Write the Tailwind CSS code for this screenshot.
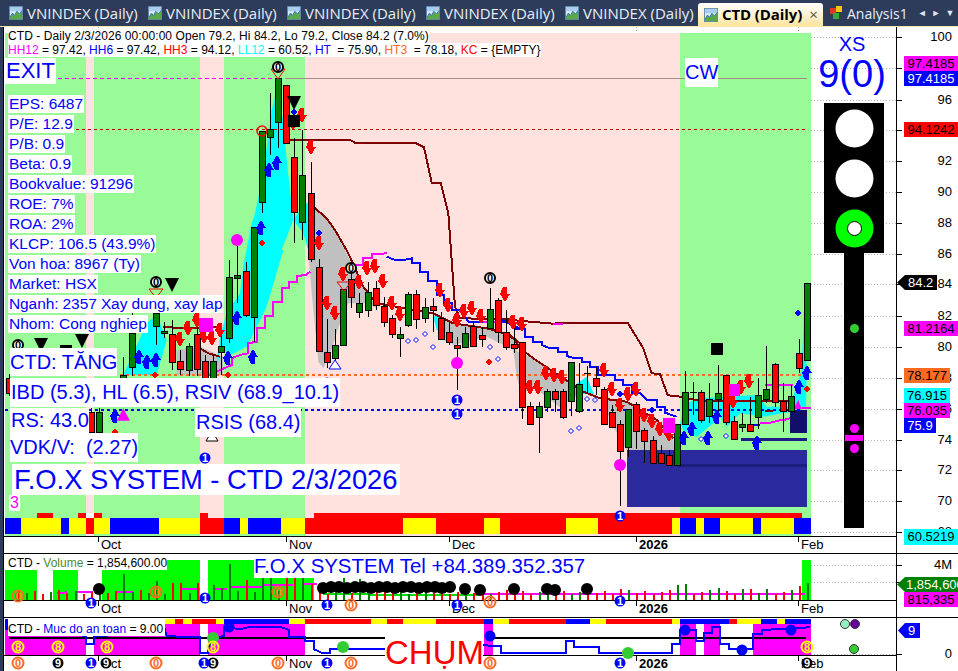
<!DOCTYPE html>
<html lang="en">
<head>
<meta charset="UTF-8">
<title>CTD (Daily)</title>
<script src="https://cdn.jsdelivr.net/npm/@tailwindcss/browser@4"></script>
</head>
<body class="w-[958px] h-[671px] overflow-hidden bg-white font-['Liberation_Sans',sans-serif] text-black">

<svg class="hidden">
  <symbol id="thumb" viewBox="0 0 16 16">
    <rect x="0.5" y="0.5" width="15" height="15" fill="#dcecf8" stroke="#5a7fa6"/>
    <rect x="1" y="1" width="14" height="5" fill="#a9cdf0"/>
    <path d="M1 13 L4 8 L6 11 L9 6 L12 9 L15 5 L15 15 L1 15Z" fill="#5aa84a"/>
    <path d="M1 13 L4 8 L6 11 L9 6 L12 9 L15 5" fill="none" stroke="#2f6fb0"/>
  </symbol>
</svg>

<!-- tabs -->
<div class="h-[27px] bg-[#2d3c5a] border-b border-[#fde7ad] flex items-start pl-[9px] text-[15px] text-[#e8eef6] font-['Open_Sans',sans-serif]">
  <div class="w-[139px] h-[26px] flex items-center gap-[4px] shrink-0"><svg class="w-[14px] h-[14px]"><use href="#thumb"/></svg><span>VNINDEX (Daily)</span></div>
  <div class="w-[139px] h-[26px] flex items-center gap-[4px] shrink-0"><svg class="w-[14px] h-[14px]"><use href="#thumb"/></svg><span>VNINDEX (Daily)</span></div>
  <div class="w-[139px] h-[26px] flex items-center gap-[4px] shrink-0"><svg class="w-[14px] h-[14px]"><use href="#thumb"/></svg><span>VNINDEX (Daily)</span></div>
  <div class="w-[139px] h-[26px] flex items-center gap-[4px] shrink-0"><svg class="w-[14px] h-[14px]"><use href="#thumb"/></svg><span>VNINDEX (Daily)</span></div>
  <div class="w-[133px] h-[26px] flex items-center gap-[4px] shrink-0"><svg class="w-[14px] h-[14px]"><use href="#thumb"/></svg><span>VNINDEX (Daily)</span></div>
  <div class="w-[125px] h-[23px] mt-[3px] shrink-0 rounded-t-[3px] bg-gradient-to-b from-white to-[#fde49c] flex items-center pl-[6px] gap-[4px] text-black">
    <svg class="w-[14px] h-[14px]"><use href="#thumb"/></svg><span class="font-bold text-[15px] tracking-[-0.1px]">CTD (Daily)</span><span class="ml-[3px] text-[#55524a] text-[15px]">×</span>
  </div>
  <div class="h-[26px] flex items-center gap-[4px] ml-[6px] shrink-0 text-[14px]">
    <svg class="w-[14px] h-[14px]" viewBox="0 0 14 14"><rect x="1" y="2" width="6" height="6" fill="#e0342b"/><rect x="7" y="0" width="6" height="6" fill="#f5c518"/><rect x="4" y="7" width="6" height="6" fill="#39a935"/></svg>
    <span>Analysis1</span>
  </div>
  <div class="flex items-center gap-[5px] h-[26px] ml-[10px] text-[9px] text-[#dfe6ef] shrink-0"><span>◄</span><span>►</span><span>▼</span></div>
</div>

<div class="flex h-[644px]">
  <div class="w-[4px] bg-[#2d3c5a] border-r border-black shrink-0"></div>
  <div class="flex-1 flex flex-col">

    <!-- price pane -->
    <div class="h-[527px] flex border-b border-black">
      <div class="relative w-[892px] flex flex-col">
        <div class="flex-1"></div>
        <div class="h-[17px] border-t border-black flex text-[13px] leading-[16px]">
          <div class="w-[94px]"></div>
          <div class="relative w-[188px] pl-[3px]"><i class="absolute left-0 top-0 w-px h-[5px] bg-black"></i>Oct</div>
          <div class="relative w-[163px] pl-[3px]"><i class="absolute left-0 top-0 w-px h-[5px] bg-black"></i>Nov</div>
          <div class="relative w-[187px] pl-[3px]"><i class="absolute left-0 top-0 w-px h-[5px] bg-black"></i>Dec</div>
          <div class="relative w-[162px] pl-[3px] font-bold"><i class="absolute left-0 top-0 w-px h-[5px] bg-black"></i>2026</div>
          <div class="relative pl-[3px]"><i class="absolute left-0 top-0 w-px h-[5px] bg-black"></i>Feb</div>
        </div>
        <svg id="main" class="absolute left-0 top-0 w-[892px] h-[526px]" viewBox="4 27 892 526" shape-rendering="crispEdges"></svg>

        <div class="absolute left-[4px] top-[2px] text-[12px] leading-[14px]">
          <div class="bg-white w-fit tracking-[0.07px]">CTD - Daily 2/3/2026 00:00:00 Open 79.2, Hi 84.2, Lo 79.2, Close 84.2 (7.0%)</div>
          <div class="bg-white w-fit whitespace-pre"><span class="text-[#ff00ff]">HH12</span> = 97.42, <span class="text-[#0000ff]">HH6</span> = 97.42, <span class="text-[#ff0000]">HH3</span> = 94.12, <span class="text-[#00ffff]">LL12</span> = 60.52, <span class="text-[#0000ff]">HT</span>  = 75.90, <span class="text-[#ff6a23]">HT3</span>  = 78.18, <span class="text-[#ff0000]">KC</span> = {EMPTY}</div>
        </div>
        <div class="absolute left-[1px] top-[31px] bg-white text-[#0000ff] text-[22px] leading-[26px] px-[1px]">EXIT</div>
        <div class="absolute left-[681px] top-[31px] bg-white text-[#0000ff] text-[20px] leading-[29px]">CW</div>

        <div class="absolute left-[4px] top-[68px] flex flex-col items-start gap-[2px] text-[15.5px] leading-[18px] text-[#0000ff]">
          <div class="bg-white px-[1px]">EPS: 6487</div>
          <div class="bg-white px-[1px]">P/E: 12.9</div>
          <div class="bg-white px-[1px]">P/B: 0.9</div>
          <div class="bg-white px-[1px]">Beta: 0.9</div>
          <div class="bg-white px-[1px]">Bookvalue: 91296</div>
          <div class="bg-white px-[1px]">ROE: 7%</div>
          <div class="bg-white px-[1px]">ROA: 2%</div>
          <div class="bg-white px-[1px]">KLCP: 106.5 (43.9%)</div>
          <div class="bg-white px-[1px]">Von hoa: 8967 (Ty)</div>
          <div class="bg-white px-[1px]">Market: HSX</div>
          <div class="bg-white px-[1px] tracking-[-0.1px]">Nganh: 2357 Xay dung, xay lap</div>
          <div class="bg-white px-[1px]">Nhom: Cong nghiep</div>
        </div>

        <div class="absolute left-[6px] top-[321px] bg-white text-[#0000ff] text-[20px] leading-[28px]">CTD: TĂNG</div>
        <div class="absolute left-[6px] top-[351px] bg-white text-[#0000ff] text-[20px] leading-[29px] px-[1px] whitespace-nowrap">IBD (5.3), HL (6.5), RSIV (68.9_10.1)</div>
        <div class="absolute left-[6px] top-[381px] bg-white text-[#0000ff] text-[20px] leading-[25px] pl-[1px]">RS: 43.0</div>
        <div class="absolute left-[6px] top-[406px] bg-white text-[#0000ff] text-[20px] leading-[29px] whitespace-pre">VDK/V:  (2.27)</div>
        <div class="absolute left-[191px] top-[381px] bg-white text-[#0000ff] text-[20px] leading-[29px] px-[1px]">RSIS (68.4)</div>
        <div class="absolute left-[8px] top-[437px] bg-white text-[#0000ff] text-[27.4px] leading-[31px] px-[2px] whitespace-nowrap">F.O.X SYSTEM - CTD 2/3/2026</div>
        <div class="absolute left-[5px] top-[468px] bg-white text-[#ff00ff] text-[16px] leading-[16px] px-[1px]">3</div>

        <div class="absolute left-[807px] top-[6px] w-[82px] text-center text-[#0000ff]">
          <div class="text-[20px] leading-[22px]">XS</div>
          <div class="text-[38px] leading-[38px]">9(0)</div>
        </div>
      </div>
      <div id="ax1" class="relative flex-1 border-l border-black text-[13px]">
        <div class="absolute left-[7px] top-[29px] w-[54px] h-[15px] bg-[#ff00ff] text-center leading-[15px]">97.4185</div>
        <div class="absolute left-[7px] top-[44px] w-[54px] h-[15px] bg-[#0000ff] text-white text-center leading-[15px]">97.4185</div>
        <div class="absolute left-[7px] top-[95px] w-[54px] h-[15px] bg-[#ff0000] text-center leading-[15px]">94.1242</div>
        <div class="absolute left-0 top-[248px] w-[40px] h-[15px] bg-black text-white pl-[11px] leading-[15px] [clip-path:polygon(8px_0,100%_0,100%_100%,8px_100%,0_50%)]">84.2</div>
        <div class="absolute left-[7px] top-[294px] w-[54px] h-[15px] bg-[#ff00ff] text-center leading-[15px]">81.2164</div>
        <div class="absolute left-[7px] top-[341px] w-[46px] h-[15px] bg-[#ff6a23] text-center leading-[15px]">78.177</div>
        <div class="absolute left-[7px] top-[361px] w-[46px] h-[15px] bg-[#00ffff] text-center leading-[15px]">76.915</div>
        <div class="absolute left-[7px] top-[376px] w-[46px] h-[15px] bg-[#ff00ff] text-center leading-[15px]">76.035</div>
        <div class="absolute left-[7px] top-[391px] w-[32px] h-[15px] bg-[#0000ff] text-white text-center leading-[15px]">75.9</div>
        <div class="absolute left-[7px] top-[502px] w-[54px] h-[16px] bg-[#00ffff] text-center leading-[16px]">60.5219</div>
      </div>
    </div>

    <!-- volume pane -->
    <div class="h-[64px] flex border-b border-black">
      <div class="relative w-[892px] flex flex-col">
        <div class="flex-1"></div>
        <div class="h-[17px] border-t border-black flex text-[13px] leading-[16px]">
          <div class="w-[94px]"></div>
          <div class="relative w-[188px] pl-[3px]"><i class="absolute left-0 top-0 w-px h-[5px] bg-black"></i>Oct</div>
          <div class="relative w-[163px] pl-[3px]"><i class="absolute left-0 top-0 w-px h-[5px] bg-black"></i>Nov</div>
          <div class="relative w-[187px] pl-[3px]"><i class="absolute left-0 top-0 w-px h-[5px] bg-black"></i>Dec</div>
          <div class="relative w-[162px] pl-[3px] font-bold"><i class="absolute left-0 top-0 w-px h-[5px] bg-black"></i>2026</div>
          <div class="relative pl-[3px]"><i class="absolute left-0 top-0 w-px h-[5px] bg-black"></i>Feb</div>
        </div>
        <svg id="vol" class="absolute left-0 top-0 w-[892px] h-[63px]" viewBox="4 554 892 63" shape-rendering="crispEdges"></svg>
        <div class="absolute left-[4px] top-[2px] bg-white text-[12px] leading-[14px]">CTD - <span class="text-[#4d8c2a]">Volume</span> = 1,854,600.00</div>
        <div class="absolute left-[250px] top-[1px] bg-white text-[#0000ff] text-[20.4px] leading-[23px] whitespace-nowrap">F.O.X SYSTEM Tel +84.389.352.357</div>
      </div>
      <div id="ax2" class="relative flex-1 border-l border-black text-[13px]">
        <div class="absolute left-0 top-[23px] w-[61px] h-[15px] bg-[#008000] text-white pl-[9px] leading-[15px] overflow-hidden whitespace-nowrap [clip-path:polygon(8px_0,100%_0,100%_100%,8px_100%,0_50%)]">1,854,600</div>
        <div class="absolute left-[7px] top-[38px] w-[54px] h-[15px] bg-[#ff00ff] text-center leading-[15px]">815,335</div>
      </div>
    </div>

    <!-- safety pane -->
    <div class="h-[53px] flex">
      <div class="relative w-[892px] flex flex-col">
        <div class="flex-1"></div>
        <div class="h-[16px] border-t border-black flex text-[13px] leading-[15px]">
          <div class="w-[94px]"></div>
          <div class="relative w-[188px] pl-[3px]"><i class="absolute left-0 top-0 w-px h-[5px] bg-black"></i>Oct</div>
          <div class="relative w-[163px] pl-[3px]"><i class="absolute left-0 top-0 w-px h-[5px] bg-black"></i>Nov</div>
          <div class="relative w-[187px] pl-[3px]"><i class="absolute left-0 top-0 w-px h-[5px] bg-black"></i>Dec</div>
          <div class="relative w-[162px] pl-[3px] font-bold"><i class="absolute left-0 top-0 w-px h-[5px] bg-black"></i>2026</div>
          <div class="relative pl-[3px]"><i class="absolute left-0 top-0 w-px h-[5px] bg-black"></i>Feb</div>
        </div>
        <div class="absolute left-[381px] top-[17px] w-[98px] h-[36px] bg-white"></div>
        <svg id="safe" class="absolute left-0 top-0 w-[892px] h-[53px]" viewBox="4 618 892 53" shape-rendering="crispEdges"></svg>
        <div class="absolute left-[4px] top-[4px] bg-white text-[12px] leading-[14px] pr-[2px]">CTD - <span class="text-[#0000ff]">Muc do an toan</span> = 9.00</div>
        <div class="absolute left-[381px] top-[17px] text-[#ff0000] text-[33px] leading-[36px]">CHỤM</div>
      </div>
      <div id="ax3" class="relative flex-1 border-l border-black text-[13px]">
        <div class="absolute left-[1px] top-[5px] w-[22px] h-[15px] bg-[#0000ff] text-white pl-[10px] leading-[15px] [clip-path:polygon(7px_0,100%_0,100%_100%,7px_100%,0_50%)]">9</div>
      </div>
    </div>
  </div>
</div>

<script>
// page coordinates throughout, the o* helpers convert from traced crops
const RED = '#ff0000', GRN = '#008000', BLU = '#0000ff', MAG = '#ff00ff', CYA = '#00ffff', DRED = '#800000', GRY = '#c0c0c0';
const barX = k => Math.round(1.3 + 8.14 * k);

const rect = (x, y, x2, y2, c) => `<rect x="${x}" y="${y}" width="${x2 - x}" height="${y2 - y}" fill="${c}"/>`;
const tr = (ox, oy, s) => s.trim().split(/\s+/).map(p => { const [a, b] = p.split(','); return `${(ox + a / 3).toFixed(1)},${(oy + b / 3).toFixed(1)}`; }).join(' ');
const poly = (ox, oy, s, c) => `<polygon points="${tr(ox, oy, s)}" fill="${c}" shape-rendering="auto"/>`;
const line = (ox, oy, s, c, w = 2) => `<polyline points="${tr(ox, oy, s)}" fill="none" stroke="${c}" stroke-width="${w}"/>`;
const hline = (x, x2, y, c, dash) => `<line x1="${x}" x2="${x2}" y1="${y}.5" y2="${y}.5" stroke="${c}" ${dash ? `stroke-dasharray="${dash}"` : ''}/>`;
const hfat = (x, x2, y, c, dash) => `<line x1="${x}" x2="${x2}" y1="${y}" y2="${y}" stroke="${c}" stroke-width="2" stroke-dasharray="${dash}"/>`;
const disc = (x, y, r, c, extra = '') => `<circle cx="${x}" cy="${y}" r="${r}" fill="${c}" ${extra} shape-rendering="auto"/>`;
const dn = (x, y, c = RED) => `<polygon points="${x - 2},${y - 7} ${x + 2},${y - 7} ${x + 2},${y} ${x + 5},${y} ${x},${y + 8} ${x - 5},${y}" fill="${c}"/>`;
const up = (x, y, c = BLU) => `<polygon points="${x - 2},${y + 7} ${x + 2},${y + 7} ${x + 2},${y} ${x + 5},${y} ${x},${y - 8} ${x - 5},${y}" fill="${c}"/>`;
const dia = (x, y, r, c, hollow) => `<polygon points="${x},${y - r} ${x + r},${y} ${x},${y + r} ${x - r},${y}" fill="${hollow ? 'white' : c}" stroke="${c}" shape-rendering="auto"/>`;
const badge = (x, y, t, fill, col, stroke = 'none', r = 5.5, sw = 2) => `<circle cx="${x}" cy="${y}" r="${r}" fill="${fill}" stroke="${stroke}" stroke-width="${sw}" shape-rendering="auto"/><text x="${x}" y="${y + 4}" text-anchor="middle" font-size="11" font-weight="700" font-family="Liberation Sans" fill="${col}">${t}</text>`;

// candles: k, colour, body top, body bottom, wick top, wick bottom
const C = [
 [1,'r',378,393,374,396],[11,'r',412,432,408,436],[12,'g',412,432,408,436],
 [15,'g',375,400,357,405],[16,'g',333,367,313,376],[19,'g',313,326,300,345],[20,'g',331,333,322,338],
 [21,'r',334,362,320,370],[22,'r',361,369,350,375],[23,'g',346,370,343,376],[24,'r',334,369,328,376],
 [25,'r',361,380,355,390],[26,'g',361,380,355,390],[27,'g',346,352,335,375],[28,'g',277,338,260,343],
 [29,'g',275,278,262,303],[30,'r',271,315,262,317],[31,'g',227,317,227,342],[32,'g',131,202,131,213],
 [33,'g',129,137,93,155],[34,'g',78,122,78,148],[35,'r',85,143,85,143],[36,'r',157,212,138,243],
 [37,'g',175,222,130,240],[38,'r',193,259,162,262],[39,'r',267,351,259,352],[40,'r',352,362,319,368],
 [41,'g',345,358,329,360],[42,'g',289,345,289,345],[43,'r',279,297,263,308],[44,'g',303,312,293,318],
 [45,'g',292,310,282,317],[46,'r',288,305,281,310],[47,'r',306,322,297,327],[48,'r',318,334,315,338],
 [49,'g',334,338,327,357],[50,'g',294,325,292,327],[51,'r',294,319,290,329],[52,'g',307,318,298,323],
 [53,'r',306,310,298,332],[54,'r',318,339,312,340],[55,'r',332,342,323,345],[56,'r',345,348,337,390],
 [57,'g',333,347,327,348],[58,'r',326,346,323,347],[59,'r',335,339,327,347],[60,'g',309,328,288,328],
 [61,'r',300,332,298,343],[62,'r',332,347,310,350],[63,'r',344,348,327,353],[64,'r',342,407,342,419],
 [65,'r',406,424,402,425],[66,'g',406,417,402,453],[67,'g',391,407,389,412],[68,'r',391,399,389,412],
 [69,'r',391,417,389,419],[70,'g',362,401,362,416],[71,'g',384,411,363,413],[72,'k',373,373,366,393],
 [73,'r',378,386,367,395],[74,'r',389,424,387,425],[75,'r',412,427,405,428],[76,'r',424,451,420,506],
 [77,'g',409,447,409,457],[78,'r',404,431,402,449],[79,'r',430,441,428,463],[80,'r',440,463,436,464],
 [81,'r',453,463,445,464],[82,'r',455,465,450,466],[83,'g',424,465,424,465],[84,'g',392,424,371,425],
 [85,'k',392,392,382,415],[86,'r',392,420,390,423],[87,'g',399,416,383,423],[88,'g',393,399,365,423],
 [89,'r',375,422,375,425],[90,'r',421,439,416,440],[91,'g',424,427,413,432],[92,'r',424,431,397,431],
 [93,'g',395,417,378,429],[94,'g',389,399,346,403],[95,'r',364,402,363,407],[96,'r',401,411,383,432],
 [97,'g',396,411,385,413],[98,'r',353,368,339,373],[99,'g',283,360,283,360]
];
const candle = ([k, t, a, b, w1, w2]) => {
  const x = barX(k);
  let s = `<rect x="${x}" y="${w1}" width="1" height="${w2 - w1}" fill="#000"/>`;
  if (t === 'k') return s + `<rect x="${x - 3}" y="${a}" width="7" height="1" fill="#000"/>`;
  return s + `<rect x="${x - 3}" y="${a}" width="6" height="${b - a}" fill="${t === 'r' ? RED : GRN}" stroke="#000"/>`;
};

// main price chart
let m = '';
[[5,86,'#98fb98'],[86,94,'#ffe2de'],[94,200,'#98fb98'],[200,224,'#ffe2de'],[224,305,'#98fb98'],[305,680,'#ffe2de'],[680,811,'#98fb98']]
  .forEach(z => m += rect(z[0], 33, z[1], 536, z[2]));
m += rect(811, 33, 896, 536, '#fff');
[98, 636, 798].forEach(x => m += `<line x1="${x}.5" x2="${x}.5" y1="27" y2="33" stroke="#aaa" stroke-dasharray="1 2"/>`);
[37,68,100,130,161,192,223,254,284,316,347,378,409,440,470,501,532].forEach(y => m += hline(811, 896, y, '#b5b5b5', '1 2'));

// grey channel
m += poly(220, 60, '265,430 280,440 320,475 345,510 390,600 430,680 470,735 470,745 440,730 385,730 360,790 330,880 310,925 295,905 275,700 265,580', GRY);
m += poly(220, 60, '650,770 700,790 800,805 870,825 890,850 900,990 890,950 880,870 800,830 700,855 670,840', GRY);
m += poly(500, 270, '40,240 100,265 190,325 210,345 205,390 190,420 100,350 70,370 55,300', GRY);
m += poly(500, 270, '300,385 380,395 470,450 520,505 522,540 380,540 340,470 310,400', GRY);
m += poly(0, 250, '530,300 600,290 670,320 670,375 530,375', GRY);
// cyan
m += poly(220, 60, '165,110 190,180 200,300 220,480 165,620 125,720 95,800 75,860 0,880 -10,925 0,830 20,760 60,700 70,620 95,490 105,460 130,340 155,150', CYA);
m += poly(220, 60, '255,430 268,430 272,600 250,520 220,480', CYA);
m += poly(0, 250, '850,0 800,170 740,290 680,320 672,360 720,130 760,0', CYA);
m += poly(0, 250, '370,375 440,220 470,195 500,270 470,375', CYA);
m += poly(500, 270, '540,460 560,400 600,385 770,375 800,410 870,410 905,300 912,120 920,300 918,415 870,425 790,440 720,430 680,470 660,440 640,460 590,500 550,480', CYA);
m += poly(500, 270, '210,330 225,345 260,320 285,380 260,370 225,380', CYA);
m += poly(220, 60, '640,770 655,765 665,810 650,810', CYA);
m += poly(0, 250, '370,475 350,512 390,512', MAG);
m += poly(500, 270, '895,390 880,418 905,418', MAG);

// navy stop boxes
m += rect(627, 450, 807, 507, '#2a2a9c') + rect(677, 464, 807, 467, '#1d1d7a') + rect(790, 410, 807, 433, '#10106b') + rect(741, 438, 807, 441, '#1c1c88');

// level lines
m += hline(58, 275, 78, MAG, '4 3');
m += hline(285, 807, 78, '#aa8a86');
m += hline(76, 805, 129, '#c00000', '3 3');
m += hfat(120, 807, 375, '#ff6a23', '3 3');
m += hfat(5, 800, 410, BLU, '3 3');

// trend lines
m += line(220, 60, '205,240 390,240 405,248 585,248 612,262 635,368 662,368 685,460 690,530 705,740 720,775 880,778', DRED);
m += line(500, 270, '0,147 160,161 190,158 383,158 430,235 455,310 480,312 503,376 530,378 600,392 880,392', DRED);
m += line(0, 250, '490,232 590,234 660,232', DRED);
m += line(0, 250, '600,295 625,310 660,320', DRED);
m += line(220, 60, '280,440 320,475 345,510 385,580 430,680 470,730 640,760 700,790 800,805 870,825 900,850', DRED);
m += line(500, 270, '0,185 40,205 60,235 100,265 190,325 250,365 300,385 380,395 470,450 520,505', DRED);
m += line(220, 60, '-220,1000 -60,960 0,930 35,915 35,895 60,885 85,880 85,850 110,845 110,805 135,805 135,768 160,768 160,725 185,725 185,685 207,685 207,665 232,665 232,648 258,645 270,635', MAG);
m += line(220, 60, '408,615 430,615 430,595 455,595 455,583 500,580', MAG);
m += line(220, 60, '500,590 525,600 550,600 575,595 575,610 600,610 600,635 625,635 625,662 650,662 650,705 672,705 672,730 695,730 695,750 720,750 745,785 790,785', BLU);
m += line(220, 60, '790,785 825,785', MAG) + line(220, 60, '840,785 870,785 895,805', BLU);
m += line(500, 270, '0,148 20,155 50,178 75,178 75,200 100,200 100,215 125,215 125,225 150,235 175,235 175,245 200,245 200,258 225,265 245,265 245,275 270,275 270,290 295,290 295,315 345,315 345,330 370,330 370,345 395,345 395,370 420,370 440,390 470,390 470,410 495,410 495,428 530,440', BLU);
m += line(500, 270, '760,465 780,465', BLU) + line(500, 270, '780,460 810,458 835,452 860,448 870,445', MAG) + line(500, 270, '795,345 880,345', MAG) + line(500, 270, '905,413 933,413', MAG) + line(500, 270, '160,161 190,161', MAG);
m += rect(765, 410, 773, 412, DRED);

C.forEach(c => m += candle(c));

// arrows
[[245,165],[220,185],[272,260],[296,550],[320,730],[344,760],[368,642],[416,667],[442,625],[466,617],[490,663],[515,730],[540,762],[660,690],[685,735],[710,780],[733,753],[757,745],[782,768],[855,702],[880,785]]
  .forEach(p => m += dn(Math.round(220 + p[0] / 3), Math.round(60 + p[1] / 3)));
[[15,72],[40,155],[65,162],[90,350],[113,350],[139,310],[163,316],[187,320],[311,300],[335,358],[359,405],[383,372],[407,358],[431,435],[455,452],[481,478],[506,493],[724,350],[748,333],[700,392]]
  .forEach(p => m += dn(Math.round(500 + p[0] / 3), Math.round(270 + p[1] / 3)));
[[540,268],[565,233],[590,210],[613,257],[637,265],[661,240]].forEach(p => m += dn(Math.round(p[0] / 3), Math.round(250 + p[1] / 3)));
[[25,895],[100,890],[50,775],[124,505],[148,330],[172,310]].forEach(p => m += up(Math.round(220 + p[0] / 3), Math.round(60 + p[1] / 3)));
[[553,503],[577,478],[625,505],[650,440],[772,520],[896,352],[920,310]].forEach(p => m += up(Math.round(500 + p[0] / 3), Math.round(270 + p[1] / 3)));
[[418,320],[442,335],[467,330],[685,325],[710,203],[760,320],[344,497]].forEach(p => m += up(Math.round(p[0] / 3), Math.round(250 + p[1] / 3)));

// markers
[[237,240],[457,363],[620,465]].forEach(p => m += disc(p[0], p[1], 6, MAG));
m += `<line x1="237" x2="237" y1="246" y2="303" stroke="#000"/>`;
[[199,318,213,332],[663,418,675,433],[729,384,740,396]].forEach(r => m += rect(r[0], r[1], r[2], r[3], MAG));
m += rect(711, 343, 723, 355, '#000') + rect(288, 115, 300, 127, '#000') + rect(60, 345, 72, 348, '#000');
[[172,278],[294,96],[41,338],[82,334]].forEach(p => m += `<polygon points="${p[0] - 7},${p[1]} ${p[0] + 7},${p[1]} ${p[0]},${p[1] + 14}" fill="#000" shape-rendering="auto"/>`);
[[262,243],[489,362],[155,375],[228,375],[115,432]].forEach(p => m += dia(p[0], p[1], 3, RED));
m += dia(807, 389, 3, RED);
[[319,233],[294,112],[620,394],[652,410],[798,313]].forEach(p => m += dia(p[0], p[1], 3, BLU));
[[408,341],[416,340],[425,334],[433,347],[490,347],[498,359],[587,399],[595,400],[571,431],[579,428],[701,439],[726,436]].forEach(p => m += dia(p[0], p[1], 2.5, BLU, true));
m += `<polygon points="335,360 341,369 329,369" fill="white" stroke="${BLU}" shape-rendering="auto"/><polygon points="212,431 218,441 206,441" fill="white" stroke="#000" shape-rendering="auto"/>`;
m += `<polygon points="337,282 351,282 344,291" fill="none" stroke="${RED}" shape-rendering="auto"/><polygon points="271,69 285,69 278,79" fill="none" stroke="${RED}" shape-rendering="auto"/><polygon points="149,289 163,289 156,298" fill="none" stroke="${RED}" shape-rendering="auto"/>`;
m += `<circle cx="262" cy="131" r="5" fill="none" stroke="${RED}" stroke-width="1.5" shape-rendering="auto"/>`;
[[278,67],[351,268],[490,278],[156,282],[18,345]].forEach(p => m += badge(p[0], p[1], '0', 'white', '#000', '#000', 5));
[[457,400],[457,414],[205,458],[327,383]].forEach(p => m += badge(p[0], p[1], '1', BLU, '#fff'));

// bottom signal bands
[[37,53],[78,102],[200,208],[314,802]].forEach(b => m += rect(b[0], 513, b[1], 518, RED));
m += rect(86, 513, 94, 518, '#fff');
[[5,21,BLU],[21,61,'#ff0'],[61,69,BLU],[69,86,'#ff0'],[86,94,RED],[94,110,'#ff0'],[110,159,BLU],[159,200,'#ff0'],[200,224,RED],[224,240,BLU],[240,248,'#ff0'],[248,281,BLU],[281,305,'#ff0'],[305,403,RED],[403,436,'#ff0'],[436,484,RED],[484,500,'#ff0'],[500,566,RED],[566,598,'#ff0'],[598,672,RED],[672,680,'#ff0'],[680,696,BLU],[696,704,'#ff0'],[704,720,BLU],[720,753,'#ff0'],[753,761,BLU],[761,794,'#ff0'],[794,811,BLU]]
  .forEach(b => m += rect(b[0], 518, b[1], 534, b[2]));
m += badge(620, 516, '1', BLU, '#fff');

// traffic light
m += rect(844, 250, 864, 528, '#000') + rect(824, 103, 884, 253, '#000');
m += disc(854.5, 128.5, 19, '#fff') + disc(854.5, 178.5, 19, '#fff') + disc(854.5, 228.5, 19, '#00ff00') + disc(854.5, 228.5, 7, '#fff', 'stroke="#000"');
m += disc(854.5, 328.5, 4.5, '#33cc33') + disc(854.5, 428.5, 4.5, MAG) + disc(854.5, 448.5, 4.5, MAG) + rect(845, 435, 863, 441, MAG);
document.getElementById('main').innerHTML = m;

// volume pane
let v = '';
[[5,37,570],[53,78,570],[102,200,560],[208,305,560],[305,314,578],[802,811,560]].forEach(b => v += rect(b[0], b[2], b[1], 600, '#00ff00'));
v += hline(811, 896, 565, '#b5b5b5', '1 2') + hline(811, 896, 582, '#b5b5b5', '1 2');
v += line(0, 530, '170,190 200,187', MAG) + line(0, 530, '225,187 280,187', MAG) + line(0, 530, '345,187 400,187', MAG) + line(0, 530, '540,178 600,178', MAG) + line(0, 530, '640,176 680,176', MAG) + line(0, 530, '690,170 790,170', MAG) + line(0, 530, '790,165 880,165', MAG) + line(0, 530, '905,163 950,163', MAG);
v += line(0, 530, '970,193 1440,195', '#00dd00') + line(480, 530, '0,193 975,193', MAG);
const tall = {15:574,19:581,28:564,33:566,36:575,39:583,42:568,30:580,26:585,47:586,38:584,32:578,35:578,37:577,24:583,44:579,27:588,22:583,21:583,98:586,99:583,83:585,76:589,92:589,88:588,84:584,94:589,91:589};
const colorOf = {}; C.forEach(c => colorOf[c[0]] = c[1]);
for (let k = 2; k < 100; k++) {
  const top = tall[k] || (594 - (k * 7) % 5);
  const t = colorOf[k] || (k % 3 ? 'r' : 'g');
  v += rect(barX(k), top, barX(k) + 2, 600, t === 'g' ? GRN : RED);
}
[99,323,331,339,347,355,363,371,379,387,395,403,411,419,427,435,442,450,465,480,514,547,555,587].forEach((x, i) => v += disc(x, 587 + (i % 3 === 1 ? 1 : 0) + (x < 323 || x > 450 ? 2 : 0), 6, '#000'));
[[18,596,'0'],[156,592,'0'],[278,592,'0'],[351,605,'0'],[490,602,'0']].forEach(p => v += badge(p[0], p[1], p[2], 'none', '#ff6a23', '#ff6a23'));
[[91,603],[205,598],[327,605],[457,605],[620,601]].forEach(p => v += badge(p[0], p[1], '1', BLU, '#fff'));
document.getElementById('vol').innerHTML = v;

// safety pane
let s = '';
[[5,86],[94,200],[208,305],[484,493],[680,696],[704,720],[753,811]].forEach(b => s += rect(b[0], 624, b[1], 655, MAG));
[[165,175,'#ff0'],[175,183,RED],[183,192,'#ff0'],[192,216,RED],[216,224,'#ff0'],[224,289,BLU],[289,305,'#ff0'],[305,371,RED],[371,387,'#ff0'],[387,403,RED],[403,436,'#ff0'],[436,484,RED],[484,493,BLU],[493,509,'#ff0'],[509,566,RED],[566,590,BLU],[590,606,'#ff0'],[606,672,RED],[672,680,'#ff0'],[680,729,BLU],[729,737,RED],[737,761,'#ff0'],[761,777,BLU],[777,785,'#ff0'],[785,811,BLU]]
  .forEach(b => s += rect(b[0], 619, b[1], 624, b[2]));
s += rect(5, 619, 8, 630, BLU);
s += hline(811, 896, 654, '#b5b5b5', '1 2');
s += rect(9, 637, 385, 639, '#000') + rect(494, 637, 806, 639, '#000');
s += line(0, 530, '232,315 258,318 258,342 282,342 282,318 340,316', BLU);
s += line(0, 530, '492,290 500,318 575,322 600,322 600,370 624,370 624,350 660,320 672,318 672,290 720,298 750,290 840,290 866,300 866,320 915,320 915,332 942,332 942,358 965,368 990,368 990,358 1155,358', BLU);
s += line(480, 530, '10,345 40,348 62,348 62,368 258,368 258,332 282,332 282,350 356,350 356,368 576,368 576,342 600,342 600,300 648,300 648,332 672,332 672,310 696,310 696,290 720,290 720,342 748,342 748,358 818,358 818,312 846,312 846,300 990,292', BLU);
[[490,636],[685,630],[742,650],[791,630],[229,627]].forEach(p => s += disc(p[0], p[1], 5.5, BLU));
[[628,653],[213,638],[343,647]].forEach(p => s += disc(p[0], p[1], 6, '#33cc33'));
s += disc(845, 624, 4.5, '#8ff0c8', 'stroke="#333"') + disc(855, 624, 4.5, '#660099', 'stroke="#333"') + disc(854, 649, 4.5, '#33cc33', 'stroke="#333"');
[18,58,107,213,807].forEach(x => s += badge(x, 647, '8', 'none', '#ff0', '#ff0'));
[18,156,278,351,490].forEach(x => s += badge(x, 663, '0', '#fff', '#ff6a23', '#ff6a23'));
[58,106,213,807].forEach(x => s += badge(x, 663, '9', '#000', '#fff'));
[91,204,327,620].forEach(x => s += badge(x, 663, '1', BLU, '#fff'));
document.getElementById('safe').innerHTML = s;

// axes: ticks are computed, so their offset goes inline
const axis = (id, ticks, y0) => {
  const el = document.getElementById(id);
  let h = '';
  ticks.forEach(([y, t]) => {
    h += `<i class="absolute left-0 w-[5px] h-px bg-black" style="top:${y - y0}px"></i>`;
    if (t) h += `<span class="absolute right-[6px] leading-[15px]" style="top:${y - y0 - 8}px">${t}</span>`;
  });
  el.insertAdjacentHTML('afterbegin', h);
};
axis('ax1', [[37,'100'],[68,''],[100,'96'],[130,''],[161,'92'],[192,'90'],[223,'88'],[254,'86'],[284,'84'],[316,'82'],[347,'80'],[378,'78'],[409,'76'],[440,'74'],[470,'72'],[501,'70'],[532,'68']], 27);
axis('ax2', [[565,'4M'],[582,'']], 554);
axis('ax3', [[654,'0']], 618);
</script>
</body>
</html>
